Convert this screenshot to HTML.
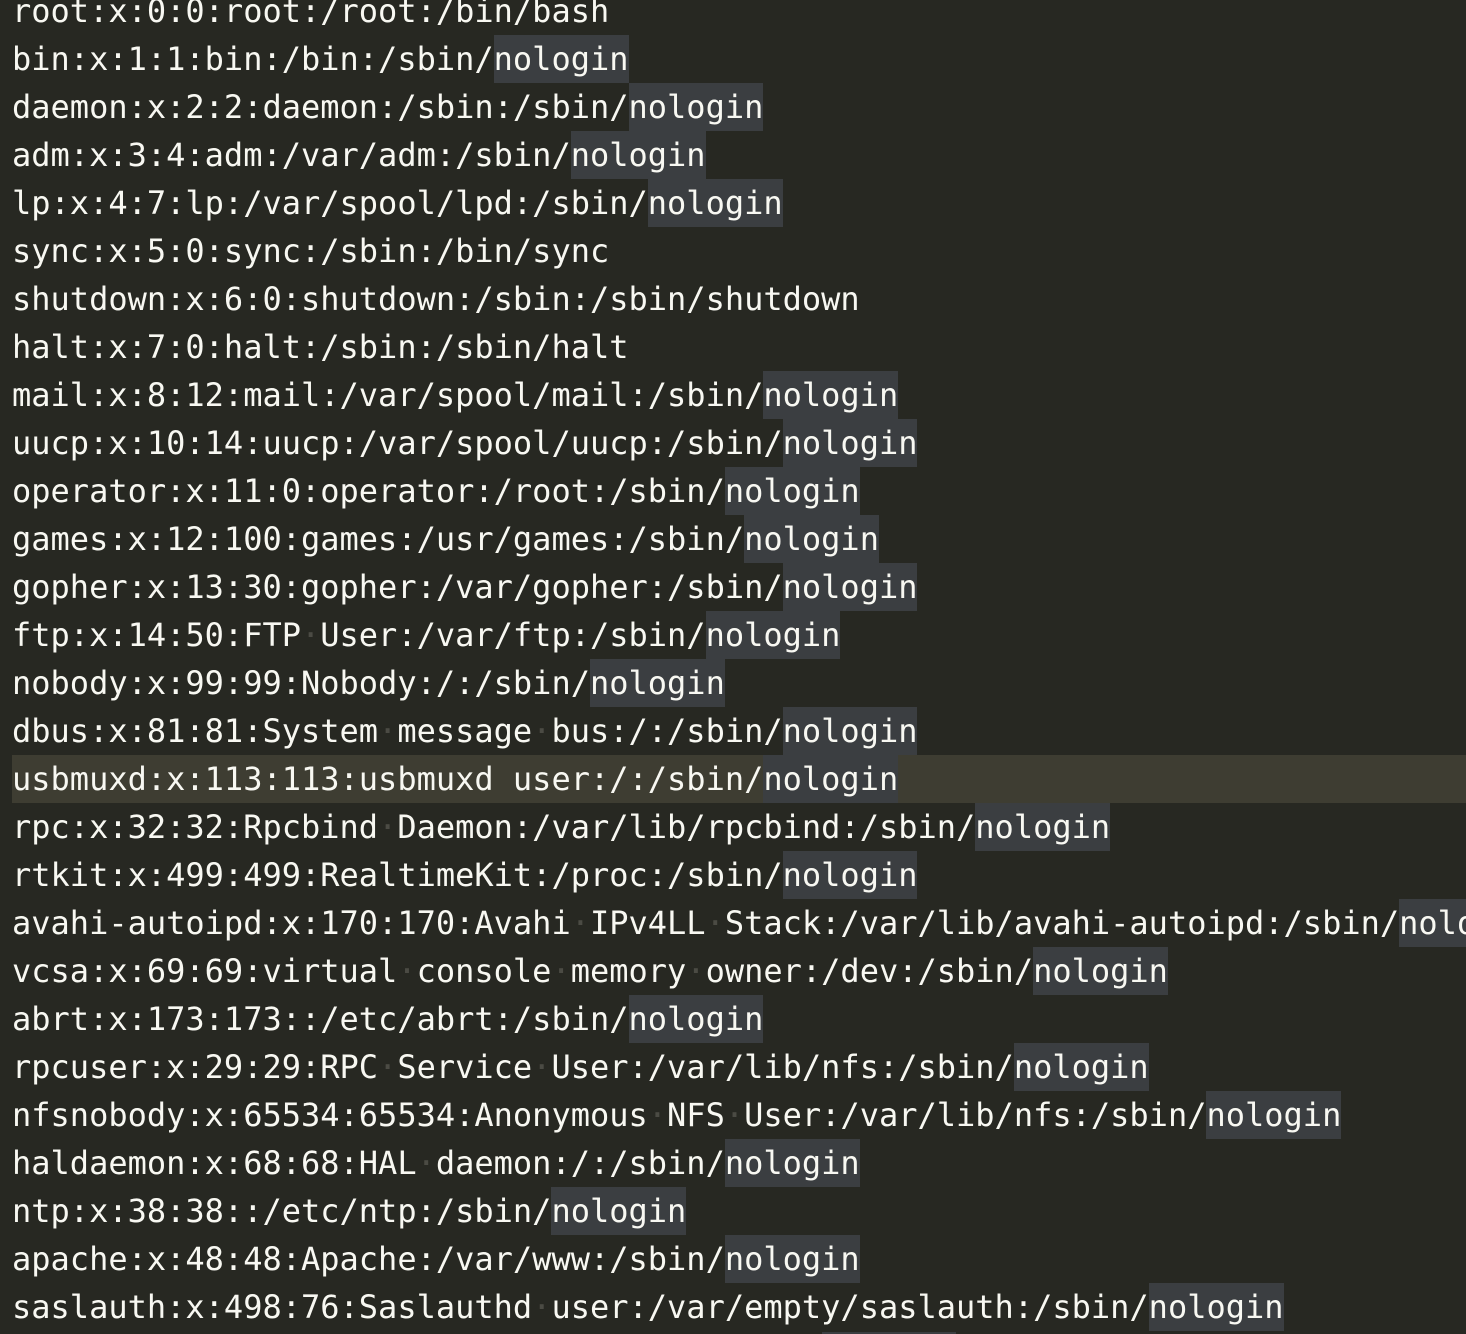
<!DOCTYPE html>
<html><head><meta charset="utf-8"><style>
html,body{margin:0;padding:0;background:#272822;width:1466px;height:1334px;overflow:hidden;position:relative}
.wrap{position:absolute;left:0;top:-13px;width:1466px}
.l{height:48px;line-height:48px;white-space:pre;font-family:"DejaVu Sans Mono","Liberation Mono",monospace;font-size:32px;color:#f8f8f2;padding-left:12px;overflow:hidden}
.cur{background:#3e3d32;margin-left:12px;padding-left:0}
.n{background:#3b3e41;display:inline-block;height:48px}
.s{color:#4b4b44}
.box{position:absolute;left:822px;top:1332px;width:134px;height:2px;background:#3b3e41}
</style></head><body>
<div class="wrap">
<div class="l">root:x:0:0:root:/root:/bin/bash</div>
<div class="l">bin:x:1:1:bin:/bin:/sbin/<span class="n">nologin</span></div>
<div class="l">daemon:x:2:2:daemon:/sbin:/sbin/<span class="n">nologin</span></div>
<div class="l">adm:x:3:4:adm:/var/adm:/sbin/<span class="n">nologin</span></div>
<div class="l">lp:x:4:7:lp:/var/spool/lpd:/sbin/<span class="n">nologin</span></div>
<div class="l">sync:x:5:0:sync:/sbin:/bin/sync</div>
<div class="l">shutdown:x:6:0:shutdown:/sbin:/sbin/shutdown</div>
<div class="l">halt:x:7:0:halt:/sbin:/sbin/halt</div>
<div class="l">mail:x:8:12:mail:/var/spool/mail:/sbin/<span class="n">nologin</span></div>
<div class="l">uucp:x:10:14:uucp:/var/spool/uucp:/sbin/<span class="n">nologin</span></div>
<div class="l">operator:x:11:0:operator:/root:/sbin/<span class="n">nologin</span></div>
<div class="l">games:x:12:100:games:/usr/games:/sbin/<span class="n">nologin</span></div>
<div class="l">gopher:x:13:30:gopher:/var/gopher:/sbin/<span class="n">nologin</span></div>
<div class="l">ftp:x:14:50:FTP<span class="s">·</span>User:/var/ftp:/sbin/<span class="n">nologin</span></div>
<div class="l">nobody:x:99:99:Nobody:/:/sbin/<span class="n">nologin</span></div>
<div class="l">dbus:x:81:81:System<span class="s">·</span>message<span class="s">·</span>bus:/:/sbin/<span class="n">nologin</span></div>
<div class="l cur">usbmuxd:x:113:113:usbmuxd user:/:/sbin/<span class="n">nologin</span></div>
<div class="l">rpc:x:32:32:Rpcbind<span class="s">·</span>Daemon:/var/lib/rpcbind:/sbin/<span class="n">nologin</span></div>
<div class="l">rtkit:x:499:499:RealtimeKit:/proc:/sbin/<span class="n">nologin</span></div>
<div class="l">avahi-autoipd:x:170:170:Avahi<span class="s">·</span>IPv4LL<span class="s">·</span>Stack:/var/lib/avahi-autoipd:/sbin/<span class="n">nologin</span></div>
<div class="l">vcsa:x:69:69:virtual<span class="s">·</span>console<span class="s">·</span>memory<span class="s">·</span>owner:/dev:/sbin/<span class="n">nologin</span></div>
<div class="l">abrt:x:173:173::/etc/abrt:/sbin/<span class="n">nologin</span></div>
<div class="l">rpcuser:x:29:29:RPC<span class="s">·</span>Service<span class="s">·</span>User:/var/lib/nfs:/sbin/<span class="n">nologin</span></div>
<div class="l">nfsnobody:x:65534:65534:Anonymous<span class="s">·</span>NFS<span class="s">·</span>User:/var/lib/nfs:/sbin/<span class="n">nologin</span></div>
<div class="l">haldaemon:x:68:68:HAL<span class="s">·</span>daemon:/:/sbin/<span class="n">nologin</span></div>
<div class="l">ntp:x:38:38::/etc/ntp:/sbin/<span class="n">nologin</span></div>
<div class="l">apache:x:48:48:Apache:/var/www:/sbin/<span class="n">nologin</span></div>
<div class="l">saslauth:x:498:76:Saslauthd<span class="s">·</span>user:/var/empty/saslauth:/sbin/<span class="n">nologin</span></div>
</div>
<div class="box"></div>
</body></html>
